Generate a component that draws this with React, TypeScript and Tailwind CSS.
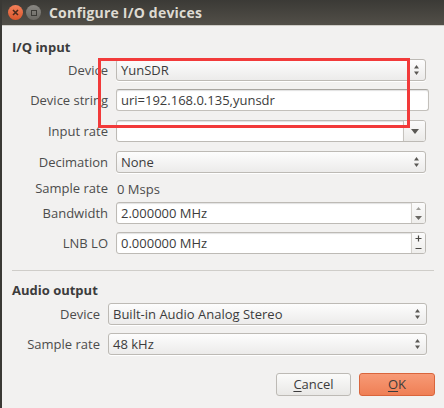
import React from "react";

const font = { fontFamily: '"Open Sans", "DejaVu Sans", sans-serif' };

const UpDown = () => (
  <svg width="7" height="12" viewBox="0 0 7 12" className="text-[#5a5854]">
    <path d="M3.5 1 L6 4.5 L1 4.5 Z" fill="currentColor" />
    <path d="M3.5 11 L6 7.5 L1 7.5 Z" fill="currentColor" />
  </svg>
);

const Combo = ({ value, w = "" }: { value: string; w?: string }) => (
  <div
    className={`h-[22px] flex items-center rounded-[3px] border border-[#bdbab5] bg-gradient-to-b from-[#fdfdfd] to-[#ecebea] shadow-[0_1px_0_#fff] ${w}`}
  >
    <span className="flex-1 pl-[4px] text-[13px] text-[#3c3c3c] leading-none">
      {value}
    </span>
    <span className="w-[17px] flex justify-center">
      <UpDown />
    </span>
  </div>
);

const LineEdit = ({ value }: { value: string }) => (
  <div className="h-[22px] flex items-center rounded-[3px] border border-[#c3c0bb] border-t-[#a9a6a1] bg-white shadow-[inset_0_1px_1px_rgba(0,0,0,0.12)]">
    <span className="pl-[4px] text-[13px] text-[#3c3c3c] leading-none">
      {value}
    </span>
  </div>
);

const EditCombo = () => (
  <div className="h-[22px] flex rounded-[3px] border border-[#bdbab5] bg-white overflow-hidden">
    <div className="flex-1 shadow-[inset_0_1px_1px_rgba(0,0,0,0.12)]" />
    <div className="w-[22px] flex items-center justify-center border-l border-[#c6c3be] bg-gradient-to-b from-[#fbfbfb] to-[#ebeae8]">
      <svg width="8" height="5" viewBox="0 0 8 5">
        <path d="M0 0 L8 0 L4 5 Z" fill="#5a5854" />
      </svg>
    </div>
  </div>
);

const Spin = ({ value, plus }: { value: string; plus?: boolean }) => (
  <div className="h-[22px] flex rounded-[3px] border border-[#bdbab5] bg-white overflow-hidden">
    <div className="flex-1 flex items-center pl-[4px] text-[13px] text-[#3c3c3c] leading-none shadow-[inset_0_1px_1px_rgba(0,0,0,0.12)]">
      {value}
    </div>
    <div className="w-[14px] flex flex-col border-l border-[#d3d0cb] bg-gradient-to-b from-[#fbfbfb] to-[#efeeec]">
      {plus ? (
        <>
          <span className="flex-1 flex items-center justify-center">
            <svg width="7" height="7" viewBox="0 0 7 7">
              <path d="M3.5 0.5 V6.5 M0.5 3.5 H6.5" stroke="#4a4844" strokeWidth="1.2" />
            </svg>
          </span>
          <span className="flex-1 flex items-center justify-center">
            <svg width="7" height="3" viewBox="0 0 7 3">
              <path d="M0.5 1.5 H6.5" stroke="#4a4844" strokeWidth="1.2" />
            </svg>
          </span>
        </>
      ) : (
        <>
          <span className="flex-1 flex items-center justify-center">
            <svg width="5" height="3" viewBox="0 0 5 3">
              <path d="M2.5 0 L5 3 L0 3 Z" fill="#a09e9a" />
            </svg>
          </span>
          <span className="flex-1 flex items-center justify-center">
            <svg width="7" height="4" viewBox="0 0 7 4">
              <path d="M0 0 L7 0 L3.5 4 Z" fill="#6a6864" />
            </svg>
          </span>
        </>
      )}
    </div>
  </div>
);

const Row = ({
  label,
  children,
  cls = "",
  labelW = "w-[106px]",
}: {
  label: string;
  children: React.ReactNode;
  cls?: string;
  labelW?: string;
}) => (
  <div className={`flex items-center ${cls}`}>
    <div
      className={`${labelW} shrink-0 text-right text-[13px] text-[#4c4c4c] leading-none`}
    >
      {label}
    </div>
    <div className="flex-1 ml-[8px]">{children}</div>
  </div>
);

export default function App() {
  return (
    <div
      style={font}
      className="relative w-[444px] h-[408px] bg-[#f2f1f0] border-l-2 border-[#3a3935] overflow-hidden"
    >
      {/* title bar */}
      <div className="h-[26px] flex items-center bg-gradient-to-b from-[#3b3a36] to-[#524f48] border-b border-[#cfcdc7]">
        <div className="ml-[6px] w-[15px] h-[15px] rounded-full bg-gradient-to-b from-[#f4815a] to-[#d9552a] flex items-center justify-center">
          <svg width="7" height="7" viewBox="0 0 7 7">
            <path d="M1 1 L6 6 M6 1 L1 6" stroke="#4a2a1c" strokeWidth="1.6" />
          </svg>
        </div>
        <div className="ml-[3px] w-[15px] h-[15px] rounded-full bg-gradient-to-b from-[#8a8883] to-[#6a6863] flex items-center justify-center">
          <div className="w-[6px] h-[6px] border border-[#3b3a36]" />
        </div>
        <div className="ml-[8px] text-[14px] font-bold text-[#dfdbd2] tracking-[0.2px]">
          Configure I/O devices
        </div>
      </div>

      {/* I/Q input */}
      <div className="mt-[12px] ml-[10px] text-[13px] font-bold text-[#3c3c3c] leading-[18px]">
        I/Q input
      </div>
      <div className="mr-[18px]">
        <Row label="Device" cls="mt-[3px]">
          <Combo value="YunSDR" />
        </Row>
        <Row label="Device string" cls="mt-[8px] -mr-[3px]">
          <LineEdit value="uri=192.168.0.135,yunsdr" />
        </Row>
        <Row label="Input rate" cls="mt-[9px]">
          <EditCombo />
        </Row>
        <Row label="Decimation" cls="mt-[9px]">
          <Combo value="None" />
        </Row>
        <Row label="Sample rate" cls="mt-[5px] h-[20px]">
          <span className="text-[13px] text-[#4c4c4c] leading-none pl-px">
            0 Msps
          </span>
        </Row>
        <Row label="Bandwidth" cls="mt-[4px]">
          <Spin value="2.000000 MHz" />
        </Row>
        <Row label="LNB LO" cls="mt-[8px]">
          <Spin value="0.000000 MHz" plus />
        </Row>
      </div>

      <div className="mt-[16px] mx-[10px] border-t border-[#cfcdc9]" />

      {/* Audio output */}
      <div className="mt-[10px] ml-[10px] text-[13px] font-bold text-[#3c3c3c] leading-[18px]">
        Audio output
      </div>
      <div className="mr-[17px]">
        <Row label="Device" cls="mt-[4px]" labelW="w-[98px]">
          <Combo value="Built-in Audio Analog Stereo" />
        </Row>
        <Row label="Sample rate" cls="mt-[8px]" labelW="w-[98px]">
          <Combo value="48 kHz" />
        </Row>
      </div>

      <div className="mt-[18px] mr-[9px] flex justify-end gap-[8px]">
        <button className="w-[75px] h-[23px] rounded-[3px] border border-[#bdbab5] bg-gradient-to-b from-[#fbfbfa] to-[#e9e8e6] text-[13px] text-[#3c3c3c] leading-none">
          <span className="underline underline-offset-2">C</span>ancel
        </button>
        <button className="w-[76px] h-[23px] rounded-[3px] border border-[#d9653c] bg-gradient-to-b from-[#f79a76] to-[#ef7f55] text-[13px] text-[#3c3c3c] leading-none">
          <span className="underline underline-offset-2">O</span>K
        </button>
      </div>

      {/* red highlight box */}
      <div className="absolute left-[96px] top-[58px] w-[312px] h-[70px] border-[3px] border-[#f23a3a] pointer-events-none" />
    </div>
  );
}
